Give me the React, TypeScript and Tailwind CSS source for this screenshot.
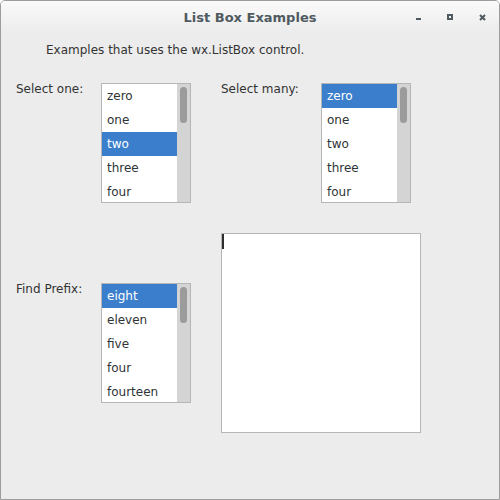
const ONE = ["zero", "one", "two", "three", "four"];
const PREFIX = ["eight", "eleven", "five", "four", "fourteen"];

function ListBox({ items, selected }: { items: string[]; selected: number }) {
  return (
    <div className="relative flex h-[120px] w-[90px] shrink-0 overflow-hidden border border-[#b6b6b6] bg-white">
      <div className="flex-1 overflow-hidden">
        {items.map((item, i) => (
          <div
            key={item}
            className={`h-[24px] pl-[5px] leading-[24px] ${
              i === selected ? "bg-[#3b7fcc] text-white" : "text-[#2e3436]"
            }`}
          >
            {item}
          </div>
        ))}
      </div>
      <div className="w-[13px] bg-[#d4d4d4] pl-[3px] pt-[3px]">
        <div className="h-[36px] w-[7px] rounded-full bg-[#9b9b9b]" />
      </div>
    </div>
  );
}

export default function App() {
  return (
    <div className="h-[500px] w-[500px] overflow-hidden rounded-t-[5px] border border-[#9c9c9c] bg-[#ececec] font-['DejaVu_Sans',sans-serif] text-[12px] leading-[15px] text-[#333]">
      {/* Title bar */}
      <div className="relative flex h-[32px] items-center justify-center bg-gradient-to-b from-[#fafafa] to-[#ececec]">
        <span className="text-[13px] font-bold text-[#4f5a60]">List Box Examples</span>
        <div className="absolute right-[13px] top-[13px] flex items-start gap-[26px]">
          <div className="mt-[4px] h-[2px] w-[5px] bg-[#4f5a60]" />
          <div className="h-[6px] w-[6px] border-2 border-[#4f5a60]" />
          <svg width="7" height="7" viewBox="0 0 7 7">
            <path d="M1 1 L6 6 M6 1 L1 6" stroke="#4f5a60" strokeWidth="2" />
          </svg>
        </div>
      </div>

      {/* Panel */}
      <div className="flex flex-col">
        <div className="pl-[45px] pt-[10px]">Examples that uses the wx.ListBox control.</div>

        <div className="mt-[25px] flex items-start pl-[15px]">
          <div className="-mt-[1px] w-[85px]">Select one:</div>
          <ListBox items={ONE} selected={2} />
          <div className="-mt-[1px] ml-[30px] w-[100px]">Select many:</div>
          <ListBox items={ONE} selected={0} />
        </div>

        <div className="mt-[30px] flex items-start pl-[15px]">
          <div className="mt-[50px] flex items-start">
            <div className="-mt-[1px] w-[85px]">Find Prefix:</div>
            <ListBox items={PREFIX} selected={0} />
          </div>
          <div className="ml-[30px] h-[200px] w-[200px] border border-[#b6b6b6] bg-white">
            <div className="h-[15px] w-[2px] bg-[#2e2e2e]" />
          </div>
        </div>
      </div>
    </div>
  );
}
